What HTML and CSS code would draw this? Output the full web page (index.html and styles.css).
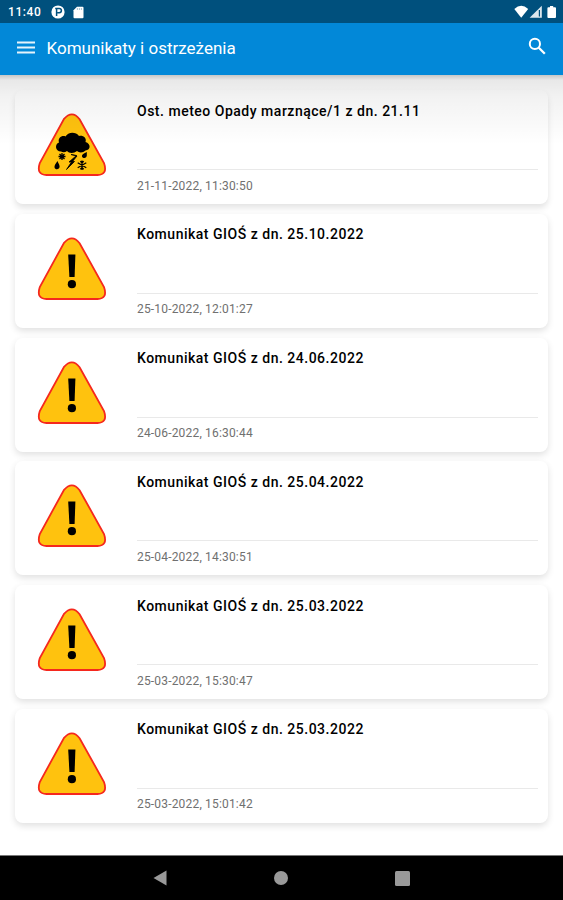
FILE: index.html
```
<!DOCTYPE html>
<html lang="pl">
<head>
    <meta charset="UTF-8">
    <meta name="viewport" content="width=device-width, initial-scale=1.0">
    <title>Komunikaty i ostrzeżenia</title>
    <link rel="stylesheet" href="styles.css">
</head>
<body>

<!-- Shared symbols -->
<svg class="symbols" width="0" height="0">
    <symbol id="triangle" viewBox="0 0 70 64">
        <path d="M26.8 6.2 Q35 -3.4 42.6 6.2 L67 50 Q71 61.8 60.5 62 H9.5 Q-1 61.8 2.8 50 Z" fill="#ffc20e" stroke="#f5281e" stroke-width="1.8"/>
    </symbol>
    <symbol id="warning" viewBox="0 0 70 64">
        <use href="#triangle"/>
        <path d="M31.2 17.4 H38.4 L37.6 40 H32.4 Z"/>
        <circle cx="34.9" cy="47.2" r="4.1"/>
    </symbol>
    <symbol id="meteo" viewBox="0 0 70 64">
        <use href="#triangle"/>
        <path d="M24 38.5 C18 38.5 17.5 31 22 29.5 C20.5 25 25 22 28.5 23.5 C31 18.5 39 18.5 42 23 C46 22 50 25 48.5 29 C54 30.5 54 37 48.5 37.5 C46 40 42 40 40 38 C37 40.5 32 40.5 30 38 C28 39.5 26 39.5 24 38.5 Z"/>
        <path d="M34 41.5 L39.5 42.5 L32 49 H34.5 L29.5 56.5 L37.5 48.5 H35.5 L40 43 Z" stroke="#000" stroke-width="0.8"/>
        <path d="M20.5 48 C18.5 51 17.3 52.5 17.5 54.2 C18 57.2 22.6 57 22.6 53.5 C22.5 51.5 21.2 50 20.5 48 Z"/>
        <path d="M49.8 39 C46 40.5 44.5 42 45 43.5 C46 46 49.8 45.5 49.8 42.6 Z"/>
        <path d="M25 40 V47 M21.5 43.5 H28.5 M22.5 41 L27.5 46 M27.5 41 L22.5 46" stroke="#000" stroke-width="1.3"/>
        <path d="M45 47.5 V57 M40.7 49.8 L49.3 54.7 M49.3 49.8 L40.7 54.7 M43.3 48.3 L45 49.8 L46.7 48.3 M43.3 56.3 L45 54.7 L46.7 56.3" stroke="#000" stroke-width="1.3" fill="none"/>
    </symbol>
</svg>

<div class="status-bar">
    <span class="clock">11:40</span>
    <svg class="app-icon" width="14" height="14" viewBox="0 0 14 14">
        <circle cx="7" cy="7" r="6.6" fill="#fff"/>
        <path d="M4.2 3.4 H8.2 A2.2 2.2 0 0 1 8.2 7.8 H6.4 M5.6 3.4 V11" fill="none" stroke="#00507d" stroke-width="1.5"/>
    </svg>
    <svg class="sd-icon" width="11" height="13" viewBox="0 0 11 13">
        <path d="M4 0.7 H9.5 Q10.5 0.7 10.5 1.7 V11.2 Q10.5 12.2 9.5 12.2 H1.5 Q0.5 12.2 0.5 11.2 V4.2 Z" fill="#fff"/>
        <path d="M4.4 2 V4 M6.4 2 V4 M8.4 2 V4" stroke="#8fb2c6" stroke-width="0.8"/>
    </svg>
    <svg class="signal-icons" width="43" height="14" viewBox="0 0 43 14">
        <path d="M0.3 4 Q7.2 -2.4 14.2 4 L7.2 12.8 Z" fill="#fff"/>
        <path d="M27.8 0.8 V12.8 H15.6 Z" fill="#dce7ee"/>
        <path d="M25.4 5 V11.5" stroke="#00507d" stroke-width="1.2"/>
        <path d="M36 1 H39.2 V2.2 H41 Q42 2.2 42 3.2 V12 Q42 13 41 13 H34.4 Q33.4 13 33.4 12 V3.2 Q33.4 2.2 34.4 2.2 H36 Z" fill="#fff"/>
    </svg>
</div>

<header class="app-bar">
    <svg class="menu-icon" width="18" height="13" viewBox="0 0 18 13">
        <path d="M0 1.5 H18 M0 6.5 H18 M0 11.5 H18" stroke="#e6f3fb" stroke-width="2.2"/>
    </svg>
    <h1>Komunikaty i ostrzeżenia</h1>
    <svg class="search-icon" width="18" height="18" viewBox="0 0 18 18">
        <circle cx="6.9" cy="6.9" r="5.1" fill="none" stroke="#fff" stroke-width="2"/>
        <path d="M10.8 10.8 L16.8 16.8" stroke="#fff" stroke-width="2.3"/>
    </svg>
</header>

<main class="list">
    <article class="card">
        <svg class="sign"><use href="#meteo"/></svg>
        <div class="content">
            <h2>Ost. meteo Opady marznące/1 z dn. 21.11</h2>
            <p>21-11-2022, 11:30:50</p>
        </div>
    </article>
    <article class="card">
        <svg class="sign"><use href="#warning"/></svg>
        <div class="content">
            <h2>Komunikat GIOŚ z dn. 25.10.2022</h2>
            <p>25-10-2022, 12:01:27</p>
        </div>
    </article>
    <article class="card">
        <svg class="sign"><use href="#warning"/></svg>
        <div class="content">
            <h2>Komunikat GIOŚ z dn. 24.06.2022</h2>
            <p>24-06-2022, 16:30:44</p>
        </div>
    </article>
    <article class="card">
        <svg class="sign"><use href="#warning"/></svg>
        <div class="content">
            <h2>Komunikat GIOŚ z dn. 25.04.2022</h2>
            <p>25-04-2022, 14:30:51</p>
        </div>
    </article>
    <article class="card">
        <svg class="sign"><use href="#warning"/></svg>
        <div class="content">
            <h2>Komunikat GIOŚ z dn. 25.03.2022</h2>
            <p>25-03-2022, 15:30:47</p>
        </div>
    </article>
    <article class="card">
        <svg class="sign"><use href="#warning"/></svg>
        <div class="content">
            <h2>Komunikat GIOŚ z dn. 25.03.2022</h2>
            <p>25-03-2022, 15:01:42</p>
        </div>
    </article>
</main>

<nav class="nav-bar">
    <svg width="14" height="16" viewBox="0 0 14 16"><path d="M0.5 8 L13.5 0.5 V15.5 Z" fill="#999"/></svg>
    <svg width="14" height="14" viewBox="0 0 14 14"><circle cx="7" cy="7" r="7" fill="#999"/></svg>
    <svg width="15" height="15" viewBox="0 0 15 15"><rect width="15" height="15" rx="1.5" fill="#999"/></svg>
</nav>

</body>
</html>
```
FILE: styles.css
```
* {
    margin: 0;
    padding: 0;
    box-sizing: border-box;
}

body {
    font-family: Roboto, sans-serif;
    height: 900px;
    background: #fff;
    display: flex;
    flex-direction: column;
    overflow: hidden;
}

.symbols {
    position: absolute;
}

.status-bar {
    height: 23px;
    background: #00507d;
    color: white;
    display: flex;
    align-items: center;
    padding: 1px 6px 0 8px;
    flex-shrink: 0;
}

.clock {
    font-size: 12px;
    font-weight: 500;
    letter-spacing: 0.6px;
    width: 43px;
}

.sd-icon {
    margin-left: 8px;
}

.signal-icons {
    margin-left: auto;
}

.app-bar {
    height: 52px;
    background: #0288d8;
    color: white;
    display: flex;
    align-items: center;
    padding: 0 17px 0 16.5px;
    flex-shrink: 0;
}

.menu-icon {
    margin-top: -4px;
}

.app-bar h1 {
    font-size: 17px;
    font-weight: 400;
    margin-left: 12px;
    margin-top: -2px;
}

.search-icon {
    margin-left: auto;
    margin-top: -6px;
}

.list {
    flex: 1;
    padding: 15px;
    display: flex;
    flex-direction: column;
    gap: 9.8px;
    position: relative;
}

/* Shadow of the app bar, falls over the first card */
.list::before {
    content: "";
    position: absolute;
    top: 0;
    left: 0;
    right: 0;
    height: 70px;
    background: linear-gradient(rgba(0, 0, 0, 0.22), rgba(0, 0, 0, 0.09) 5px, rgba(0, 0, 0, 0.05) 22px, rgba(0, 0, 0, 0));
    z-index: 1;
}

.card {
    height: 114px;
    background: white;
    border-radius: 8px;
    box-shadow: 0 3px 7px rgba(0, 0, 0, 0.12);
    display: flex;
    padding: 0 10px 0 22px;
    flex-shrink: 0;
}

.card:first-child {
    box-shadow: 0 4px 6px rgba(0, 0, 0, 0.11);
}

.sign {
    width: 70px;
    height: 64px;
    margin-top: 23px;
}

.content {
    flex: 1;
    margin-left: 30px;
    display: flex;
    flex-direction: column;
    justify-content: space-between;
    padding-top: 12.5px;
}

.content h2 {
    font-size: 14px;
    line-height: 17px;
    font-weight: 500;
    letter-spacing: 0.51px;
    color: #000;
}

.content p {
    height: 35px;
    border-top: 1px solid #e9e9e9;
    padding-top: 8.5px;
    font-size: 12px;
    line-height: 15px;
    letter-spacing: 0.18px;
    color: #707070;
}

.nav-bar {
    height: 45px;
    background: black;
    border-top: 1px solid #777;
    display: flex;
    align-items: center;
    justify-content: space-between;
    padding: 0 153px;
    flex-shrink: 0;
}
```
